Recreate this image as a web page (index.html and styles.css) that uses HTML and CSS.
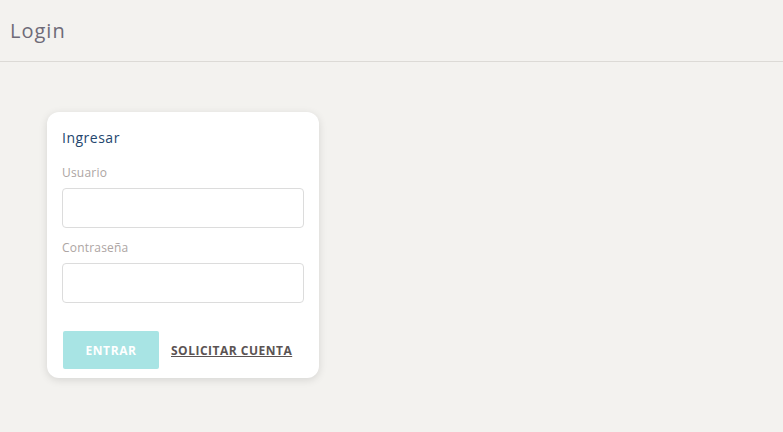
FILE: index.html
```html
<!DOCTYPE html>
<html lang="es">
<head>
<meta charset="utf-8">
<title>Login</title>
<link rel="stylesheet" href="styles.css">
</head>
<body>
<header class="topbar">
  <h1 class="title">Login</h1>
</header>
<main class="main">
  <form class="card">
    <h2 class="card-title">Ingresar</h2>
    <label class="field">
      <span class="label">Usuario</span>
      <input class="input" type="text">
    </label>
    <label class="field">
      <span class="label">Contraseña</span>
      <input class="input" type="password">
    </label>
    <div class="actions">
      <button class="btn" type="button">ENTRAR</button>
      <a class="link" href="#">SOLICITAR CUENTA</a>
    </div>
  </form>
</main>
</body>
</html>
```
FILE: styles.css
```css
* { box-sizing: border-box; }
html, body { margin: 0; padding: 0; }
body {
  background: #f3f2ef;
  font-family: "Open Sans", "DejaVu Sans", sans-serif;
  width: 783px;
  height: 432px;
  overflow: hidden;
}
.topbar {
  height: 62px;
  border-bottom: 1px solid #dcdad6;
  display: flex;
  align-items: center;
  padding-left: 10px;
}
.title {
  margin: 0;
  font-size: 20px;
  font-weight: 400;
  color: #6e6b78;
  letter-spacing: 1px;
}
.main {
  padding: 50px 0 0 47px;
}
.card {
  width: 272px;
  background: #fff;
  border-radius: 12px;
  box-shadow: 0 2px 8px rgba(0,0,0,0.12);
  padding: 17px 15px 9px 15px;
}
.card-title {
  margin: 0 0 18px 0;
  font-size: 14px;
  font-weight: 400;
  color: #24466e;
  line-height: 18px;
  letter-spacing: 0.5px;
}
.field {
  display: flex;
  flex-direction: column;
  margin-bottom: 12px;
}
.label {
  font-size: 12px;
  color: #ada5a3;
  line-height: 16px;
  margin-bottom: 7px;
  letter-spacing: 0.2px;
}
.input {
  height: 40px;
  width: 242px;
  border: 1px solid #dcdcdc;
  border-radius: 4px;
  background: #fff;
  outline: none;
}
.actions {
  display: flex;
  align-items: center;
  gap: 12px;
  margin-top: 28px;
  padding-left: 1px;
}
.btn {
  width: 96px;
  height: 38px;
  border: none;
  border-radius: 2px;
  background: #a8e4e4;
  color: #fff;
  font-family: inherit;
  font-weight: 700;
  font-size: 12px;
  letter-spacing: 0.6px;
}
.link {
  color: #5b5353;
  font-weight: 700;
  font-size: 12px;
  text-decoration: underline;
  letter-spacing: 0.5px;
}
```
